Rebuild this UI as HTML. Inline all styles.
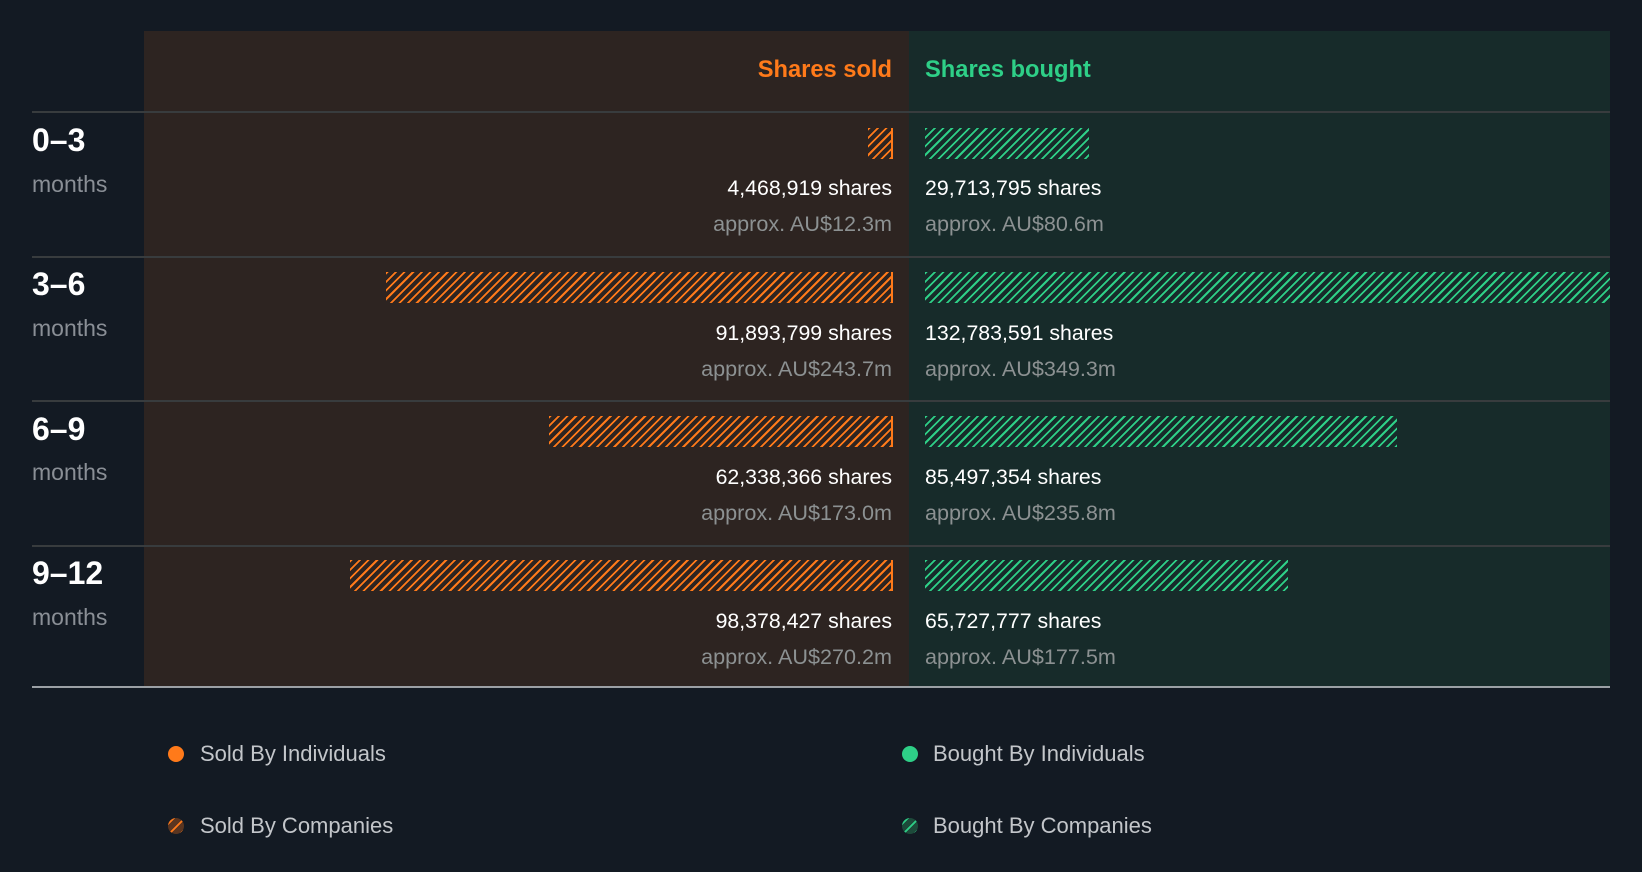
<!DOCTYPE html>
<html><head><meta charset="utf-8"><style>
*{margin:0;padding:0;box-sizing:border-box}
body{width:1642px;height:872px;background:#131a23;font-family:"Liberation Sans",Roboto,sans-serif;position:relative;overflow:hidden}
.a{position:absolute}
.lp{left:144px;top:31px;width:765px;height:656px;background:#2d2421}
.rp{left:909px;top:31px;width:701px;height:656px;background:#172b2a}
.ln{left:32px;width:1578px;height:2px;background:#383c3e}
.hd{top:54px;font-size:23.7px;font-weight:bold;line-height:32px}
.bar{height:31px}
.so{background:repeating-linear-gradient(135deg,#ff7a1a 0 1.9px,transparent 1.9px 6.1px);border-right:2px solid #ff7a1a}
.bo{background:repeating-linear-gradient(135deg,#2ecf87 0 1.9px,transparent 1.9px 6.1px)}
.t{font-size:21.3px;line-height:26px;color:#fff;white-space:nowrap}
.g{color:#8c9192;font-size:21.6px}
.r{text-align:right;right:750px}
.l{left:925px}
.rg{left:32px;font-size:32px;font-weight:bold;color:#fff;line-height:36px}
.mo{left:32px;font-size:23px;color:#8a8f96;line-height:28px}
.lg{font-size:22px;color:#c3c6ca;line-height:28px}
.dot{width:16px;height:16px;border-radius:50%}
</style></head><body>
<div class="a lp"></div><div class="a rp"></div>
<div class="a hd" style="right:750px;color:#ff7a1a">Shares sold</div>
<div class="a hd" style="left:925px;color:#2ecf87">Shares bought</div>
<div class="a ln" style="top:111px"></div>
<div class="a ln" style="top:256px"></div>
<div class="a ln" style="top:400px"></div>
<div class="a ln" style="top:545px"></div>
<div class="a ln" style="top:686px;background:#9ba0a5"></div>

<div class="a rg" style="top:122px">0–3</div><div class="a mo" style="top:170px">months</div>
<div class="a bar so" style="top:128px;left:868px;width:25px"></div>
<div class="a bar bo" style="top:128px;left:925px;width:164px"></div>
<div class="a t r" style="top:175px">4,468,919 shares</div>
<div class="a t l" style="top:175px">29,713,795 shares</div>
<div class="a t r g" style="top:211px">approx. AU$12.3m</div>
<div class="a t l g" style="top:211px">approx. AU$80.6m</div>

<div class="a rg" style="top:266px">3–6</div><div class="a mo" style="top:314px">months</div>
<div class="a bar so" style="top:272px;left:386px;width:507px"></div>
<div class="a bar bo" style="top:272px;left:925px;width:685px"></div>
<div class="a t r" style="top:320px">91,893,799 shares</div>
<div class="a t l" style="top:320px">132,783,591 shares</div>
<div class="a t r g" style="top:356px">approx. AU$243.7m</div>
<div class="a t l g" style="top:356px">approx. AU$349.3m</div>

<div class="a rg" style="top:411px">6–9</div><div class="a mo" style="top:458px">months</div>
<div class="a bar so" style="top:416px;left:549px;width:344px"></div>
<div class="a bar bo" style="top:416px;left:925px;width:472px"></div>
<div class="a t r" style="top:464px">62,338,366 shares</div>
<div class="a t l" style="top:464px">85,497,354 shares</div>
<div class="a t r g" style="top:500px">approx. AU$173.0m</div>
<div class="a t l g" style="top:500px">approx. AU$235.8m</div>

<div class="a rg" style="top:555px">9–12</div><div class="a mo" style="top:603px">months</div>
<div class="a bar so" style="top:560px;left:350px;width:543px"></div>
<div class="a bar bo" style="top:560px;left:925px;width:363px"></div>
<div class="a t r" style="top:608px">98,378,427 shares</div>
<div class="a t l" style="top:608px">65,727,777 shares</div>
<div class="a t r g" style="top:644px">approx. AU$270.2m</div>
<div class="a t l g" style="top:644px">approx. AU$177.5m</div>

<div class="a dot" style="left:168px;top:746px;background:#ff7a1a"></div>
<div class="a lg" style="left:200px;top:740px">Sold By Individuals</div>
<div class="a dot" style="left:902px;top:746px;background:#2ecf87"></div>
<div class="a lg" style="left:933px;top:740px">Bought By Individuals</div>
<div class="a dot" style="left:168px;top:818px;background:repeating-linear-gradient(135deg,#5a3520 0 3px,#ff7a1a 3px 5px,#5a3520 5px 8px)"></div>
<div class="a lg" style="left:200px;top:812px">Sold By Companies</div>
<div class="a dot" style="left:902px;top:818px;background:repeating-linear-gradient(135deg,#1d4a3a 0 3px,#2ecf87 3px 5px,#1d4a3a 5px 8px)"></div>
<div class="a lg" style="left:933px;top:812px">Bought By Companies</div>
</body></html>
